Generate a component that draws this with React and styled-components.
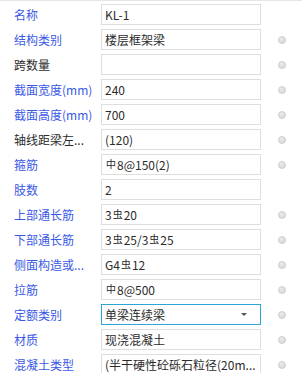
import React from "react";
import styled, { createGlobalStyle } from "styled-components";

const Global = createGlobalStyle`
  html, body { margin: 0; padding: 0; background: #fff; }
  body { font-family: "Noto Sans CJK SC", "Liberation Sans", sans-serif; }
`;

const Panel = styled.div`
  width: 302px;
  height: 373px;
  overflow: hidden;
  box-sizing: border-box;
  border-top: 1px solid #e6e6e6;
  padding-top: 3px;
  padding-left: 14px;
  display: grid;
  grid-template-columns: 87px 160px 41px;
  grid-auto-rows: 21px;
  row-gap: 4px;
  align-items: center;
`;

const Label = styled.div`
  font-size: 12px;
  line-height: 21px;
  color: ${(p) => (p.$plain ? "#2b2b2b" : "#3a58e6")};
  white-space: nowrap;
`;

const Field = styled.div`
  box-sizing: border-box;
  height: 21px;
  border: 1px solid ${(p) => (p.$active ? "#2ea3d6" : "#dedede")};
  background: #fff;
  display: flex;
  align-items: center;
  padding: 0 3px;
  font-size: 12px;
  color: #2b2b2b;
  min-width: 0;
`;

const Value = styled.span`
  flex: 1;
  min-width: 0;
  white-space: nowrap;
  line-height: 19px;
`;

const Sym = styled.span`
  font-size: 10px;
  position: relative;
  top: -2px;
  margin: 0 1px;
`;

const Arrow = styled.span`
  width: 0;
  height: 0;
  border-left: 3px solid transparent;
  border-right: 3px solid transparent;
  border-top: 3px solid #555;
  margin-right: 10px;
`;

const DotCell = styled.div`
  display: flex;
  justify-content: flex-start;
  align-items: center;
  padding-left: 17px;
`;

const Dot = styled.span`
  width: 8px;
  height: 8px;
  border-radius: 50%;
  box-sizing: border-box;
  background: radial-gradient(circle at 40% 35%, #ececec, #d2d2d2);
  border: 1px solid #cfcfcf;
`;

const A = "中";
const B = "虫";

const rows = [
  { label: "名称", value: ["KL-1"], dot: false },
  { label: "结构类别", value: ["楼层框架梁"], dot: true },
  { label: "跨数量", value: [""], dot: true, plain: true },
  { label: "截面宽度(mm)", value: ["240"], dot: true },
  { label: "截面高度(mm)", value: ["700"], dot: true },
  { label: "轴线距梁左...", value: ["(120)"], dot: true, plain: true },
  { label: "箍筋", value: [{ s: A }, "8@150(2)"], dot: true },
  { label: "肢数", value: ["2"], dot: false },
  { label: "上部通长筋", value: ["3", { s: B }, "20"], dot: true },
  { label: "下部通长筋", value: ["3", { s: B }, "25/3", { s: B }, "25"], dot: true },
  { label: "侧面构造或...", value: ["G4", { s: B }, "12"], dot: true },
  { label: "拉筋", value: [{ s: A }, "8@500"], dot: true },
  { label: "定额类别", value: ["单梁连续梁"], dot: true, active: true },
  { label: "材质", value: ["现浇混凝土"], dot: true },
  { label: "混凝土类型", value: ["(半干硬性砼砾石粒径(20m..."], dot: true },
];

export default function App() {
  return (
    <>
      <Global />
      <Panel>
        {rows.map((r, i) => (
          <React.Fragment key={i}>
            <Label $plain={r.plain}>{r.label}</Label>
            <Field $active={r.active}>
              <Value>
                {r.value.map((v, j) =>
                  typeof v === "string" ? (
                    <React.Fragment key={j}>{v}</React.Fragment>
                  ) : (
                    <Sym key={j}>{v.s}</Sym>
                  )
                )}
              </Value>
              {r.active && <Arrow />}
            </Field>
            <DotCell>{r.dot && <Dot />}</DotCell>
          </React.Fragment>
        ))}
      </Panel>
    </>
  );
}
